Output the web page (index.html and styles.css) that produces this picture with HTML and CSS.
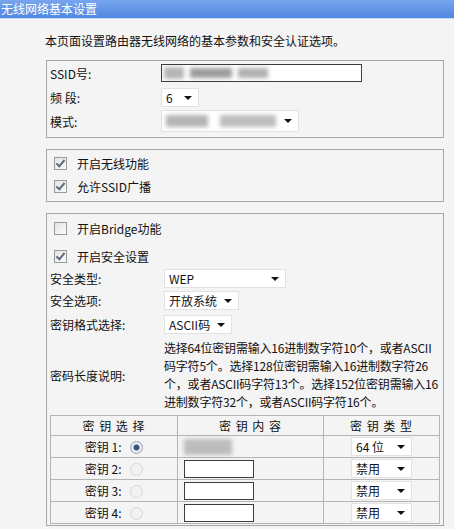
FILE: index.html
```html
<!DOCTYPE html>
<html>
<head>
    <title>无线网络基本设置</title>
    <link rel="stylesheet" href="styles.css">
</head>
<body>
    <div class="title">无线网络基本设置</div>
    <div class="intro">本页面设置路由器无线网络的基本参数和安全认证选项。</div>

    <div class="box box-basic">
        <div class="row">
            <label class="lbl">SSID号:</label>
            <div class="text-input ssid">
                <span class="smudge s1"></span>
                <span class="smudge s2"></span>
                <span class="smudge s3"></span>
            </div>
        </div>
        <div class="row">
            <label class="lbl">频&nbsp;段:</label>
            <div class="sel sel-ch"><span>6</span><i class="arrow"></i></div>
        </div>
        <div class="row">
            <label class="lbl">模式:</label>
            <div class="sel sel-mode">
                <span class="smudge m1"></span>
                <span class="smudge m2"></span>
                <i class="arrow"></i>
            </div>
        </div>
    </div>

    <div class="box box-switch">
        <div class="check-row"><span class="cb on"></span>开启无线功能</div>
        <div class="check-row"><span class="cb on"></span>允许SSID广播</div>
    </div>

    <div class="box box-sec">
        <div class="check-row first"><span class="cb"></span>开启Bridge功能</div>
        <div class="check-row second"><span class="cb on"></span>开启安全设置</div>
        <div class="row r-type">
            <label class="lbl wide">安全类型:</label>
            <div class="sel sel-type"><span>WEP</span><i class="arrow"></i></div>
        </div>
        <div class="row r-opt">
            <label class="lbl wide">安全选项:</label>
            <div class="sel sel-opt"><span>开放系统</span><i class="arrow"></i></div>
        </div>
        <div class="row r-fmt">
            <label class="lbl wide">密钥格式选择:</label>
            <div class="sel sel-fmt"><span>ASCII码</span><i class="arrow"></i></div>
        </div>
        <div class="row desc">
            <label class="lbl wide">密码长度说明:</label>
            <div class="desc-text">选择64位密钥需输入16进制数字符10个，或者ASCII<br>码字符5个。选择128位密钥需输入16进制数字符26<br>个，或者ASCII码字符13个。选择152位密钥需输入16<br>进制数字符32个，或者ASCII码字符16个。</div>
        </div>

        <table class="keys">
            <tr class="head">
                <th class="c1">密 钥 选 择</th>
                <th class="c2">密 钥 内 容</th>
                <th class="c3">密 钥 类 型</th>
            </tr>
            <tr>
                <td class="c1">密钥 1: <span class="radio on"></span></td>
                <td class="c2"><div class="key-blur"><span class="smudge k1"></span></div></td>
                <td class="c3"><div class="sel sel-key"><span>64 位</span><i class="arrow"></i></div></td>
            </tr>
            <tr>
                <td class="c1">密钥 2: <span class="radio"></span></td>
                <td class="c2"><div class="text-input key"></div></td>
                <td class="c3"><div class="sel sel-key"><span>禁用</span><i class="arrow"></i></div></td>
            </tr>
            <tr>
                <td class="c1">密钥 3: <span class="radio"></span></td>
                <td class="c2"><div class="text-input key"></div></td>
                <td class="c3"><div class="sel sel-key"><span>禁用</span><i class="arrow"></i></div></td>
            </tr>
            <tr>
                <td class="c1">密钥 4: <span class="radio"></span></td>
                <td class="c2"><div class="text-input key"></div></td>
                <td class="c3"><div class="sel sel-key"><span>禁用</span><i class="arrow"></i></div></td>
            </tr>
        </table>
    </div>
</body>
</html>
```

FILE: styles.css
```css
body {
    margin: 0;
    background-color: #f4f4f4;
    font-family: "Noto Sans CJK SC", "Liberation Sans", sans-serif;
    font-size: 12px;
    color: #111;
    overflow: hidden;
}

.title {
    height: 18px;
    line-height: 18px;
    padding-left: 1px;
    color: #fff;
    background: linear-gradient(#78a5ee, #5087e0);
    border-bottom: 1px solid #c9d7ef;
}

.intro {
    margin: 13px 0 0 45px;
    line-height: 18px;
}

.box {
    margin-left: 46px;
    width: 398px;
    box-sizing: border-box;
    border: 1px solid #a6a6a6;
}

.box-basic {
    margin-top: 10px;
    height: 78px;
}

.box-switch {
    margin-top: 11px;
    height: 53px;
    padding-top: 2px;
}

.box-sec {
    margin-top: 11px;
    height: 313px;
    padding-top: 2px;
}

.row {
    display: flex;
    align-items: center;
    height: 24px;
    padding-left: 3px;
}

.lbl {
    width: 111px;
    flex-shrink: 0;
}

.lbl.wide {
    width: 114px;
}

.text-input {
    position: relative;
    box-sizing: border-box;
    background: #fff;
    border: 1px solid #3c3c3c;
    overflow: hidden;
}

.ssid {
    width: 201px;
    height: 18px;
}

.smudge {
    position: absolute;
    background: #a9a9a9;
    filter: blur(2px);
}

.s1 { left: 2px; top: 2px; width: 20px; height: 12px; background: #b5b5b5; }
.s2 { left: 28px; top: 3px; width: 42px; height: 10px; background: #9c9c9c; }
.s3 { left: 76px; top: 3px; width: 30px; height: 10px; background: #b0b0b0; }

.sel {
    position: relative;
    box-sizing: border-box;
    height: 19px;
    line-height: 17px;
    background: #fff;
    border: 1px solid #e2e2e2;
    padding-left: 4px;
}

.sel .arrow {
    position: absolute;
    right: 6px;
    top: 7px;
    width: 0;
    height: 0;
    border-left: 4px solid transparent;
    border-right: 4px solid transparent;
    border-top: 4px solid #111;
}

.sel-ch { width: 38px; }
.sel-mode { width: 138px; height: 22px; }
.sel-mode .arrow { top: 8px; }
.m1 { left: 4px; top: 4px; width: 42px; height: 12px; background: #b4b4b4; }
.m2 { left: 58px; top: 4px; width: 56px; height: 12px; background: #bdbdbd; }

.sel-type { width: 122px; }
.sel-opt { width: 75px; }
.sel-fmt { width: 68px; }
.sel-key { width: 61px; margin: 0 auto; text-align: left; }

.check-row {
    display: flex;
    align-items: center;
    height: 23px;
    padding-left: 7px;
}

.box-sec .check-row.first {
    height: 24px;
}

.box-sec .check-row.second {
    height: 28px;
    padding-top: 4px;
    box-sizing: border-box;
}

.cb {
    position: relative;
    width: 11px;
    height: 11px;
    margin-right: 10px;
    border: 1px solid #9a9a9a;
    background: linear-gradient(135deg, #e4e4e4, #fbfbfb);
}

.cb.on::after {
    content: "";
    position: absolute;
    left: 3px;
    top: 0px;
    width: 3px;
    height: 7px;
    border-right: 2px solid #5e6a7e;
    border-bottom: 2px solid #5e6a7e;
    transform: rotate(40deg);
}

.r-type { height: 20px; }
.r-opt { height: 21px; margin-top: 2px; }
.r-fmt { height: 20px; margin-top: 3px; }

.desc {
    height: 72px;
    margin-top: 5px;
}

.desc-text {
    line-height: 18px;
    white-space: nowrap;
    letter-spacing: -0.2px;
}

.keys {
    margin: 4px 0 0 3px;
    width: 390px;
    border-collapse: collapse;
}

.keys th,
.keys td {
    border: 1px solid #b4b4b4;
    padding: 0;
    height: 21px;
    font-weight: normal;
}

.keys .head th {
    height: 19px;
    letter-spacing: 1px;
}

.keys .c1 { width: 126px; text-align: center; }
.keys .c2 { width: 139px; text-align: left; padding-left: 6px; }
.keys .c3 { text-align: center; }
.keys .head .c2 { text-align: center; padding-left: 0; }

.radio {
    display: inline-block;
    vertical-align: -2px;
    width: 11px;
    height: 11px;
    margin-left: 6px;
    border-radius: 50%;
    border: 1px solid #d6d6d6;
    background: #f2f2f2;
}

.radio.on {
    border-color: #9aa3b0;
    background: radial-gradient(circle, #2f4a6e 0, #3b5b85 2.5px, #e8ecf2 3.5px, #e8ecf2 100%);
}

.key-blur {
    position: relative;
    width: 50px;
    height: 18px;
}

.k1 {
    left: 0;
    top: 1px;
    width: 48px;
    height: 16px;
    background: #bcbcbc;
}

.text-input.key {
    width: 70px;
    height: 18px;
}
```
